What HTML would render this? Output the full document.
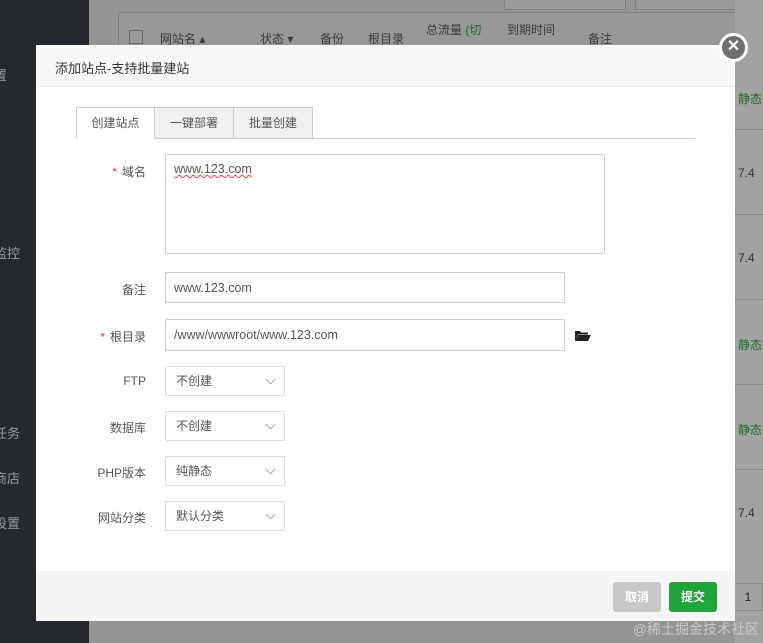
<!DOCTYPE html>
<html><head><meta charset="utf-8"><style>
*{box-sizing:border-box;margin:0;padding:0}
body{width:763px;height:643px;overflow:hidden;position:relative;background:#959595;font-family:"Liberation Sans","Noto Sans CJK SC",sans-serif;font-size:12px;color:#555}
.side{position:absolute;left:0;top:0;width:89px;height:643px;background:#25282d;color:#9a9a9a;font-size:13px}
.side span{position:absolute;left:-6px}
.main{position:absolute;left:89px;top:0;right:0;bottom:0;background:#959595}
.tbl{position:absolute;left:118px;top:12px;width:660px;height:560px;border:1px solid #808080;background:#979797}
.hdr{position:absolute;color:#3a3a3a;font-size:12px}
.green{color:#1f6b25}
.modal{position:absolute;left:36px;top:45px;width:699px;height:576px;background:#fff}
.mh{height:42px;background:#f8f8f8;border-bottom:1px solid #eee;padding:13px 0 0 19px;font-size:13px;color:#333}
.mf{position:absolute;left:0;right:0;bottom:0;height:50px;background:#f5f5f5}
.btn{position:absolute;top:11px;width:48px;height:30px;border-radius:3px;color:#fff;font-size:12px;text-align:center;line-height:30px;font-weight:bold}
.tabs{position:absolute;left:40px;top:62px;width:619px;height:32px;border-bottom:1px solid #ccc}
.tab{position:absolute;top:0;height:32px;border:1px solid #ccc;text-align:center;line-height:30px;color:#555;background:#f0f0f0}
.lbl{position:absolute;width:110px;text-align:right;color:#555;font-size:12px}
.lbl b{color:#e33;font-weight:normal;margin-right:5px}
.in{position:absolute;border:1px solid #ccc;border-radius:2px;padding:0 8px;color:#555;font-size:12.5px;background:#fff}
.sel{position:absolute;left:129px;width:120px;height:30px;border:1px solid #ddd;border-radius:2px;padding-left:10px;line-height:28px;color:#555}
.sel:after{content:"";position:absolute;right:10px;top:9px;width:6px;height:6px;border-right:1px solid #aaa;border-bottom:1px solid #aaa;transform:rotate(45deg)}
</style></head><body>
<div class="side">
<span style="top:65px">置</span>
<span style="top:243px">监控</span>
<span style="top:423px">任务</span>
<span style="top:468px">商店</span>
<span style="top:513px">设置</span>
</div>
<div class="main"></div>
<div style="position:absolute;left:504px;top:-6px;width:122px;height:16px;border:1px solid #808080;background:#9a9a9a"></div>
<div style="position:absolute;left:635px;top:-6px;width:130px;height:16px;border:1px solid #808080;background:#9a9a9a"></div>
<div class="tbl">
<div style="position:absolute;left:10px;top:17px;width:14px;height:14px;border:1px solid #666"></div>
<span class="hdr" style="left:41px;top:17px">网站名 ▴</span>
<span class="hdr" style="left:141px;top:17px">状态 ▾</span>
<span class="hdr" style="left:201px;top:17px">备份</span>
<span class="hdr" style="left:249px;top:17px">根目录</span>
<span class="hdr" style="left:307px;top:8px">总流量 <span class="green">(切</span></span>
<span class="hdr" style="left:388px;top:8px">到期时间</span>
<span class="hdr" style="left:469px;top:17px">备注</span>
<span class="hdr" style="left:620px;top:17px">PHP</span>
</div>
<div style="position:absolute;left:735px;top:0;width:28px;height:643px;background:#a2a2a2">
<span class="green" style="position:absolute;left:3px;top:90px;font-size:12px">静态</span>
<span style="position:absolute;left:3px;top:166px;color:#333">7.4</span>
<span style="position:absolute;left:3px;top:251px;color:#333">7.4</span>
<span class="green" style="position:absolute;left:3px;top:336px">静态</span>
<span class="green" style="position:absolute;left:3px;top:421px">静态</span>
<span style="position:absolute;left:3px;top:506px;color:#333">7.4</span>
<div style="position:absolute;left:0;top:129px;width:28px;border-top:1px solid #888"></div>
<div style="position:absolute;left:0;top:214px;width:28px;border-top:1px solid #888"></div>
<div style="position:absolute;left:0;top:299px;width:28px;border-top:1px solid #888"></div>
<div style="position:absolute;left:0;top:384px;width:28px;border-top:1px solid #888"></div>
<div style="position:absolute;left:0;top:469px;width:28px;border-top:1px solid #888"></div>
<div style="position:absolute;left:-2px;top:583px;width:30px;height:28px;border:1px solid #888;text-align:center;line-height:26px;color:#222">1</div>
</div>
<div style="position:absolute;right:4px;top:619px;color:#c8c8c8;font-size:14px">@稀土掘金技术社区</div>
<div class="modal">
<div class="mh">添加站点-支持批量建站</div>
<div class="tabs">
<div class="tab" style="left:0;width:79px;background:#fff;border-bottom-color:#fff">创建站点</div>
<div class="tab" style="left:78px;width:80px">一键部署</div>
<div class="tab" style="left:157px;width:80px">批量创建</div>
</div>
<div class="lbl" style="left:0;top:118px"><b>*</b>域名</div>
<div class="in" style="left:129px;top:109px;width:440px;height:100px;padding-top:7px"><span style="text-decoration:underline wavy #e44;text-decoration-thickness:1px">www.123.com</span></div>
<div class="lbl" style="left:0;top:236px">备注</div>
<div class="in" style="left:129px;top:227px;width:400px;height:31px;line-height:31px">www.123.com</div>
<div class="lbl" style="left:0;top:283px"><b>*</b>根目录</div>
<div class="in" style="left:129px;top:274px;width:400px;height:32px;line-height:31px">/www/wwwroot/www.123.com</div>
<svg style="position:absolute;left:539px;top:285px" width="16" height="12" viewBox="0 0 16 12"><path d="M0 1h5l1 1.5h7v2H3L0 11z" fill="#222"/><path d="M3 5h13l-3 6H0z" fill="#222"/></svg>
<div class="lbl" style="left:0;top:329px">FTP</div>
<div class="sel" style="top:321px">不创建</div>
<div class="lbl" style="left:0;top:374px">数据库</div>
<div class="sel" style="top:366px">不创建</div>
<div class="lbl" style="left:0;top:419px">PHP版本</div>
<div class="sel" style="top:411px">纯静态</div>
<div class="lbl" style="left:0;top:464px">网站分类</div>
<div class="sel" style="top:456px">默认分类</div>
<div class="mf">
<div class="btn" style="left:577px;background:#c8c8c8">取消</div>
<div class="btn" style="left:633px;background:#20a53a">提交</div>
</div>
</div>
<div style="position:absolute;left:719px;top:33px;width:29px;height:29px;border-radius:50%;background:#6e6e6e;border:3px solid #fff;color:#fff;text-align:center;line-height:22px;font-size:16px;font-weight:bold">✕</div>
</body></html>
